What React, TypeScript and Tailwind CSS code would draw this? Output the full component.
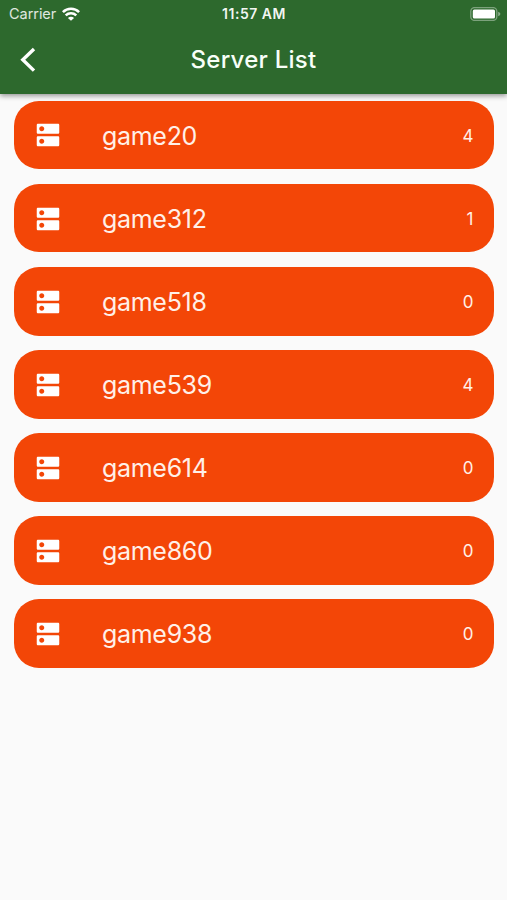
import React from 'react';
import { MdDns } from 'react-icons/md';

interface GameServer {
  name: string;
  players: number;
}

const servers: GameServer[] = [
  { name: 'game20', players: 4 },
  { name: 'game312', players: 1 },
  { name: 'game518', players: 0 },
  { name: 'game539', players: 4 },
  { name: 'game614', players: 0 },
  { name: 'game860', players: 0 },
  { name: 'game938', players: 0 },
];

const WifiIcon = () => (
  <svg className="w-[18px] h-[14px]" viewBox="0 0 18 14" fill="none" stroke="white" strokeWidth="2.6">
    <path d="M0.9 5.1C5.4 0.6 12.6 0.6 17.1 5.1" />
    <path d="M3.7 8.4C6.7 5.6 11.3 5.6 14.3 8.4" />
    <path d="M9 13.8L5.9 10.9C7.6 9.3 10.4 9.3 12.1 10.9Z" fill="white" stroke="none" />
  </svg>
);

const BatteryIcon = () => (
  <svg className="w-[31px] h-[14px]" viewBox="0 0 31 14" fill="none">
    <rect x="0.8" y="0.6" width="26" height="12.8" rx="3.6" stroke="white" strokeOpacity="0.38" strokeWidth="1.3" />
    <rect x="2.8" y="2.4" width="22.2" height="9.2" rx="1.6" fill="white" />
    <path d="M28.2 4.8C31 5.6 31 8.4 28.2 9.2Z" fill="white" fillOpacity="0.45" />
  </svg>
);

const StatusBar = () => (
  <div className="grid grid-cols-3 items-center h-[26px] pl-[9px] pr-[6px] pt-px">
    <div className="flex items-center gap-[6px]">
      <span className="pt-px text-[14.5px] leading-none tracking-[-0.05px] text-white/85">Carrier</span>
      <WifiIcon />
    </div>
    <span className="-ml-[2px] text-center text-[14px] leading-none font-semibold tracking-[0.5px] text-white/95">11:57 AM</span>
    <div className="flex justify-end">
      <BatteryIcon />
    </div>
  </div>
);

const ServerRow = ({ name, players }: GameServer) => (
  <li className="flex items-center h-[68.4px] rounded-[25px] bg-[#f34607] pl-[19.4px] pr-[20px] text-[#fff0e8]">
    <MdDns className="w-[30px] h-[30px] mt-[0.6px] text-white" />
    <span className="ml-[38.6px] mt-[2px] flex-1 text-[25px] leading-none tracking-[-0.3px]">{name}</span>
    <span className="mt-[2px] text-[17px] leading-none">{players}</span>
  </li>
);

export default function App() {
  return (
    <div className="w-full h-[900px] overflow-hidden bg-[#fafafa] font-['Inter',sans-serif]">
      <header className="relative h-[94px] bg-[#2d692d] shadow-[0_2px_5px_rgba(0,0,0,0.4)]">
        <StatusBar />
        <div className="grid grid-cols-[60px_1fr_60px] items-center h-[68px]">
          <button aria-label="Back" className="pl-[20px]">
            <svg className="w-[16px] h-[26px]" viewBox="0 0 16 26" fill="none" stroke="white" strokeWidth="3.4">
              <path d="M14 2L2.8 12.7L14 23.6" />
            </svg>
          </button>
          <h1 className="text-center text-[24px] leading-none font-medium tracking-[0.25px] text-[#f8fff8]">Server List</h1>
        </div>
      </header>

      <ul className="flex flex-col gap-[14.7px] pt-[7px] pl-[14px] pr-[13.5px]">
        {servers.map((server) => (
          <ServerRow key={server.name} {...server} />
        ))}
      </ul>
    </div>
  );
}
